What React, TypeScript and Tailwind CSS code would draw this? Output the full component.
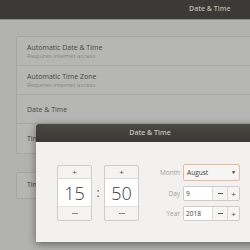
const font = "font-['Open_Sans','Noto_Sans',sans-serif]";

function ListRow({ title, subtitle, last }: { title: string; subtitle?: string; last?: boolean }) {
  return (
    <div className={`flex h-[29px] flex-col justify-center pl-[10px] ${last ? "" : "border-b border-[#a7a7a5]"}`}>
      <p className="text-[7px] leading-[9px] text-[#474745]">{title}</p>
      {subtitle ? <p className="mt-[1px] text-[6px] leading-[7px] text-[#878785]">{subtitle}</p> : null}
    </div>
  );
}

function TimeSpinner({ value }: { value: string }) {
  return (
    <div className="flex h-[56px] w-[35px] flex-col overflow-hidden rounded-[2px] border border-[#cfcdc9] bg-[#f4f3f1]">
      <div className="flex h-[13px] items-center justify-center border-b border-[#dcdad6] text-[8px] leading-none text-[#4c4c4c]">+</div>
      <div className="flex h-[27px] items-center justify-center bg-white">
        <span className="text-[18px] font-light leading-[20px] text-[#3c3c3c]">{value}</span>
      </div>
      <div className="flex flex-1 items-center justify-center border-t border-[#e4e2de]">
        <span className="block h-[1px] w-[6px] bg-[#8a8a88]" />
      </div>
    </div>
  );
}

function SpinEntry({ value }: { value: string }) {
  return (
    <div className="flex h-[15px] w-[57px] overflow-hidden rounded-[2px] border border-[#cfcdc9] text-[6.5px] text-[#3c3c3c]">
      <div className="flex w-[28px] items-center bg-white pl-[2px]">{value}</div>
      <div className="flex w-[15px] items-center justify-center border-l border-[#dcdad6] bg-[#f6f5f3]">
        <span className="block h-[1px] w-[5px] bg-[#555]" />
      </div>
      <div className="flex flex-1 items-center justify-center border-l border-[#dcdad6] bg-[#f6f5f3] text-[8px] leading-none">+</div>
    </div>
  );
}

export default function App() {
  return (
    <div className={`relative h-[250px] w-[250px] overflow-hidden bg-[#b2b2b0] ${font}`}>
      <div className="flex h-[19px] items-center bg-[#3b3a36] pl-[189px] text-[7px] font-semibold text-[#b9b7b1]">
        Date &amp; Time
      </div>
      <div className="h-[1px] bg-[#8e8d8a]" />
      <div className="pl-[16px] pt-[16px]">
        <div className="rounded-l-[2px] border border-r-0 border-[#a5a5a3] bg-[#b6b6b4]">
          <ListRow title="Automatic Date & Time" subtitle="Requires internet access" />
          <ListRow title="Automatic Time Zone" subtitle="Requires internet access" />
          <ListRow title="Date & Time" />
          <ListRow title="Time Zone" last />
        </div>
        <div className="mt-[18px] rounded-l-[2px] border border-r-0 border-[#a5a5a3] bg-[#b6b6b4]">
          <div className="flex h-[25px] items-center pl-[10px] text-[7px] text-[#474745]">Time Format</div>
        </div>
      </div>

      <div className="absolute left-[36px] top-[124px] w-[228px] overflow-hidden rounded-t-[3px] shadow-[0_2px_8px_rgba(0,0,0,0.45)]">
        <div className="flex h-[18px] items-center justify-center bg-gradient-to-b from-[#4a4843] to-[#3a3935] text-[7px] font-semibold text-[#c4c1bb]">
          Date &amp; Time
        </div>
        <div className="flex h-[100px] items-start bg-[#f2f1f0] pl-[21px] pt-[23px]">
          <div className="flex items-center gap-[3px]">
            <TimeSpinner value="15" />
            <span className="w-[6px] text-center text-[12px] leading-none text-[#555]">:</span>
            <TimeSpinner value="50" />
          </div>
          <div className="ml-[21px] -mt-[1px] grid grid-cols-[auto_auto] items-center gap-x-[3px] gap-y-[5px] text-[6.5px]">
            <span className="text-right text-[#a3a19e]">Month</span>
            <div className="flex h-[17px] w-[57px] items-center justify-between rounded-[2px] border border-[#eab8a2] bg-[#f6f5f3] px-[3px] text-[#3c3c3c]">
              <span>August</span>
              <span className="text-[5px] text-[#333]">▼</span>
            </div>
            <span className="text-right text-[#a3a19e]">Day</span>
            <SpinEntry value="9" />
            <span className="text-right text-[#a3a19e]">Year</span>
            <SpinEntry value="2018" />
          </div>
        </div>
      </div>
    </div>
  );
}
